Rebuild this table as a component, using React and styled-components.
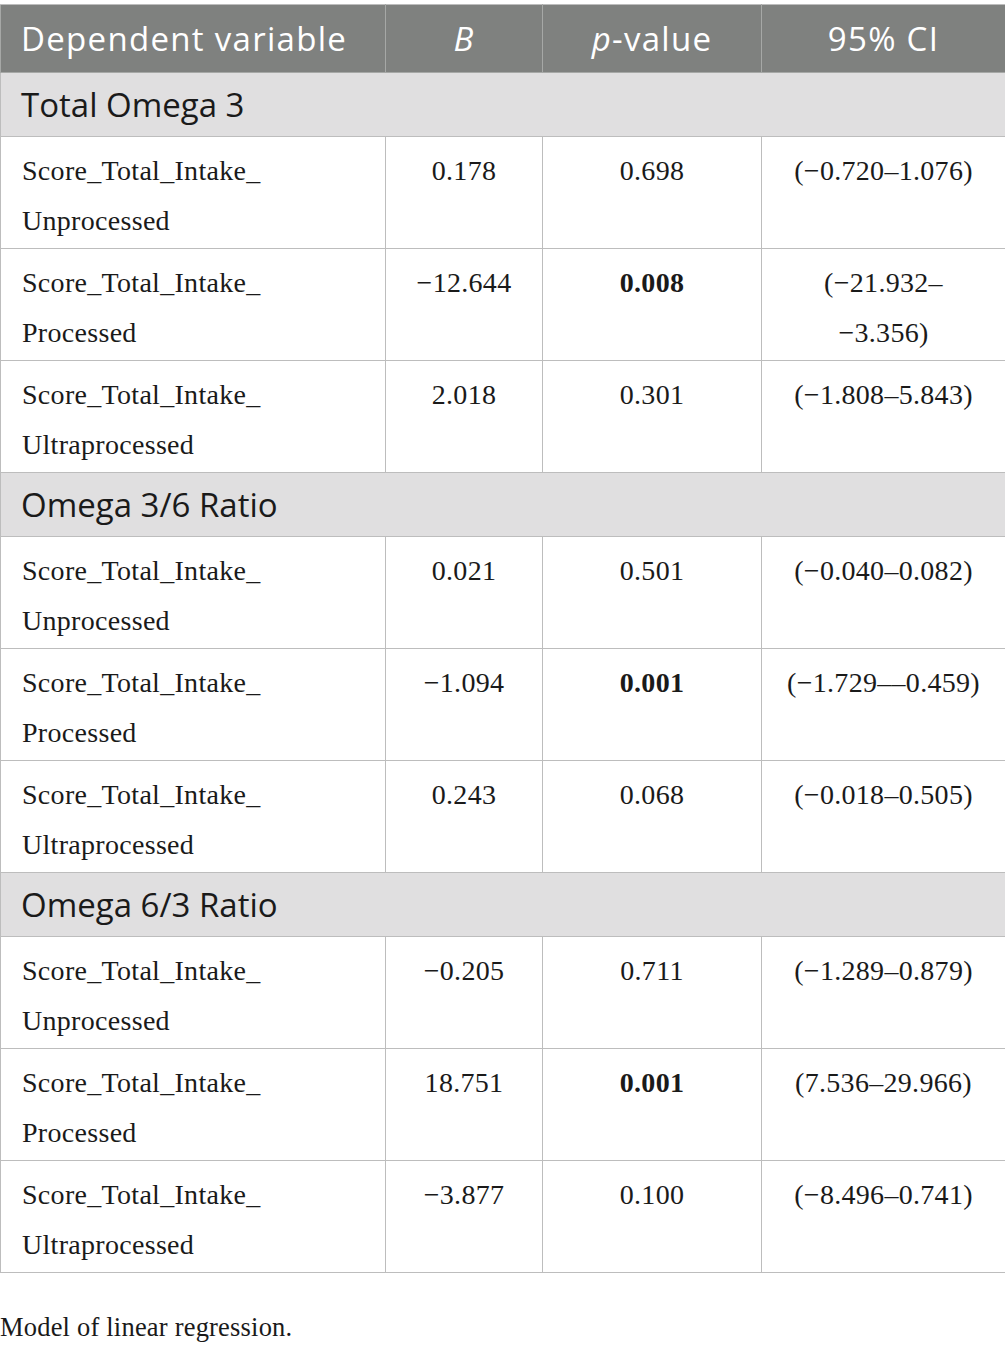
import React from 'react';
import styled, { createGlobalStyle } from 'styled-components';

const GlobalStyle = createGlobalStyle`
  body {
    margin: 0;
    padding-top: 4px;
    background: #ffffff;
  }
`;

const sections = [
  {
    title: 'Total Omega 3',
    rows: [
      { name: 'Unprocessed', b: '0.178', p: '0.698', ci: '(−0.720–1.076)' },
      { name: 'Processed', b: '−12.644', p: '0.008', bold: true, ci: '(−21.932–\n−3.356)' },
      { name: 'Ultraprocessed', b: '2.018', p: '0.301', ci: '(−1.808–5.843)' },
    ],
  },
  {
    title: 'Omega 3/6 Ratio',
    rows: [
      { name: 'Unprocessed', b: '0.021', p: '0.501', ci: '(−0.040–0.082)' },
      { name: 'Processed', b: '−1.094', p: '0.001', bold: true, ci: '(−1.729––0.459)' },
      { name: 'Ultraprocessed', b: '0.243', p: '0.068', ci: '(−0.018–0.505)' },
    ],
  },
  {
    title: 'Omega 6/3 Ratio',
    rows: [
      { name: 'Unprocessed', b: '−0.205', p: '0.711', ci: '(−1.289–0.879)' },
      { name: 'Processed', b: '18.751', p: '0.001', bold: true, ci: '(7.536–29.966)' },
      { name: 'Ultraprocessed', b: '−3.877', p: '0.100', ci: '(−8.496–0.741)' },
    ],
  },
];

const App = () => {
  return (
    <>
      <GlobalStyle />
      <Table>
        <colgroup>
          <col style={{ width: 385 }} />
          <col style={{ width: 157 }} />
          <col style={{ width: 219 }} />
          <col style={{ width: 244 }} />
        </colgroup>
        <thead>
          <tr>
            <HeadCell>Dependent variable</HeadCell>
            <HeadCell center>
              <i>B</i>
            </HeadCell>
            <HeadCell center>
              <i>p</i>-value
            </HeadCell>
            <HeadCell center>95% CI</HeadCell>
          </tr>
        </thead>
        <tbody>
          {sections.map(section => (
            <React.Fragment key={section.title}>
              <tr>
                <SectionCell colSpan={4}>{section.title}</SectionCell>
              </tr>
              {section.rows.map(row => (
                <tr key={section.title + row.name}>
                  <Cell>
                    Score_Total_Intake_
                    <br />
                    {row.name}
                  </Cell>
                  <Cell center>{row.b}</Cell>
                  <Cell center bold={row.bold}>
                    {row.p}
                  </Cell>
                  <Cell center pre>
                    {row.ci}
                  </Cell>
                </tr>
              ))}
            </React.Fragment>
          ))}
        </tbody>
      </Table>
      <Caption>Model of linear regression.</Caption>
    </>
  );
};

const Table = styled.table`
  width: 1005px;
  table-layout: fixed;
  border-collapse: collapse;
  border: 1px solid #bdbdbd;
`;

const HeadCell = styled.th`
  height: 67px;
  padding: 0 20px;
  background: #7f817f;
  color: #ffffff;
  font-family: 'Open Sans', sans-serif;
  font-size: 33px;
  letter-spacing: 1.3px;
  font-weight: 400;
  text-align: ${p => (p.center ? 'center' : 'left')};
  border: 1px solid #a6a8a6;
  border-top-color: #bdbdbd;
  white-space: nowrap;
`;

const SectionCell = styled.td`
  height: 64px;
  box-sizing: border-box;
  padding: 0 20px;
  background: #e0dfe0;
  color: #1a1a1a;
  font-family: 'Open Sans', sans-serif;
  font-size: 33px;
  border: 1px solid #bdbdbd;
`;

const Cell = styled.td`
  height: 112px;
  box-sizing: border-box;
  padding: 9px 21px 0;
  vertical-align: top;
  color: #1a1a1a;
  font-family: 'Liberation Serif', serif;
  font-size: 28px;
  letter-spacing: 0.3px;
  line-height: 50px;
  font-weight: ${p => (p.bold ? 700 : 400)};
  text-align: ${p => (p.center ? 'center' : 'left')};
  white-space: ${p => (p.pre ? 'pre-line' : 'normal')};
  border: 1px solid #bdbdbd;
`;

const Caption = styled.p`
  margin: 39px 0 0;
  font-family: 'Liberation Serif', serif;
  font-size: 26.5px;
  letter-spacing: 0.2px;
  color: #1a1a1a;
`;

export default App;
